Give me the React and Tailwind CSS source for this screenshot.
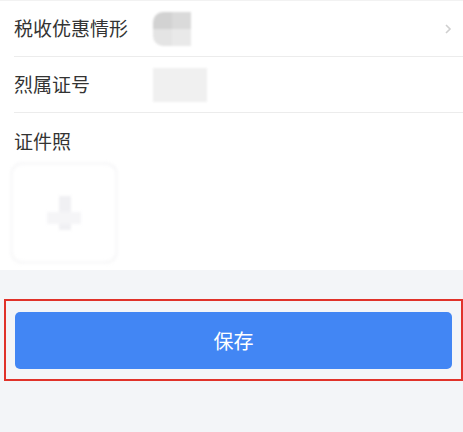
import React from 'react';

const font = { fontFamily: '"Noto Sans CJK SC", "Noto Sans", sans-serif' };

function Row({ label, children, arrow }) {
    return (
        <div className="ml-[14px] flex h-[56px] items-center border-b border-[#ececec] pr-[11px]">
            <span className="w-[139px] shrink-0 text-[19px] text-[#333]">{label}</span>
            <div className="flex flex-1 items-center">{children}</div>
            {arrow && (
                <svg width="8" height="12" viewBox="0 0 8 12" className="shrink-0">
                    <path d="M2 2l4 4-4 4" fill="none" stroke="#cfcfcf" strokeWidth="1.6" />
                </svg>
            )}
        </div>
    );
}

export default function App() {
    return (
        <div className="min-h-[432px] w-[463px] bg-[#f3f5f8]" style={font}>
            <div className="bg-white">
                <div className="h-px bg-[#f2f2f2]" />
                <Row label="税收优惠情形" arrow>
                    <div className="flex h-[34px] w-[38px] overflow-hidden rounded-l-[10px] blur-[1px]">
                        <div className="flex w-[19px] flex-col">
                            <div className="h-[17px] bg-[#d2d2d2]" />
                            <div className="h-[17px] bg-[#e4e4e4]" />
                        </div>
                        <div className="flex w-[19px] flex-col">
                            <div className="h-[17px] bg-[#dadada]" />
                            <div className="h-[17px] bg-[#e9e9e9]" />
                        </div>
                    </div>
                </Row>
                <Row label="烈属证号">
                    <div className="h-[34px] w-[54px] bg-[#f0f0f0] blur-[1px]" />
                </Row>
                <div className="px-[14px] pt-[15px] pb-[6px]">
                    <div className="text-[19px] leading-[26px] text-[#333]">证件照</div>
                    <div className="mt-[8px] -ml-[4px] flex h-[102px] w-[108px] items-center justify-center rounded-[12px] border-[3px] border-[#f8f8f9] blur-[1.5px]">
                        <div className="relative h-[34px] w-[34px]">
                            <div className="absolute left-[12px] top-0 h-[34px] w-[12px] bg-[#f0f0f3]" />
                            <div className="absolute left-0 top-[16px] h-[12px] w-[34px] bg-[#f5f5f7]" />
                        </div>
                    </div>
                </div>
            </div>
            <div className="pt-[29px]">
                <div className="ml-[4px] border-2 border-[#e0322a] px-[9px] pt-[11px] pb-[10px]">
                    <button className="flex h-[57px] w-full items-center justify-center rounded-[5px] bg-[#4286f4] text-[20px] text-white">
                        保存
                    </button>
                </div>
            </div>
        </div>
    );
}
